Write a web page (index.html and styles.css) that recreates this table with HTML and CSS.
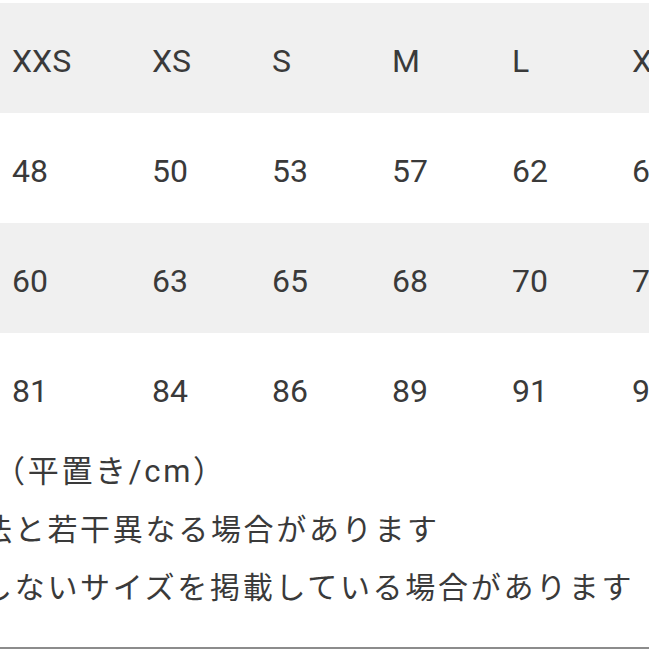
FILE: index.html
```html
<!DOCTYPE html>
<html lang="ja">
<head>
<meta charset="utf-8">
<title>サイズ表</title>
<link rel="stylesheet" href="styles.css">
</head>
<body>
<div class="page">
  <div class="size-table">
    <div class="row shaded">
      <span class="cell">XXS</span><span class="cell">XS</span><span class="cell">S</span><span class="cell">M</span><span class="cell">L</span><span class="cell">XL</span>
    </div>
    <div class="row">
      <span class="cell">48</span><span class="cell">50</span><span class="cell">53</span><span class="cell">57</span><span class="cell">62</span><span class="cell">65</span>
    </div>
    <div class="row shaded">
      <span class="cell">60</span><span class="cell">63</span><span class="cell">65</span><span class="cell">68</span><span class="cell">70</span><span class="cell">72</span>
    </div>
    <div class="row">
      <span class="cell">81</span><span class="cell">84</span><span class="cell">86</span><span class="cell">89</span><span class="cell">91</span><span class="cell">94</span>
    </div>
  </div>
  <div class="notes">
    <p class="note note-unit">（平置き/cm）</p>
    <p class="note note-diff">法と若干異なる場合があります</p>
    <p class="note note-size">しないサイズを掲載している場合があります</p>
  </div>
  <div class="rule"></div>
</div>
</body>
</html>
```
FILE: styles.css
```css
html, body {
  margin: 0;
  padding: 0;
  background: #ffffff;
  overflow: hidden;
}

.page {
  width: 649px;
  height: 649px;
  overflow: hidden;
  padding-top: 3px;
  box-sizing: border-box;
  font-family: Roboto, "Noto Sans CJK JP", sans-serif;
  color: #3a3a3a;
}

.size-table {
  display: flex;
  flex-direction: column;
}

.row {
  display: grid;
  grid-template-columns: 140px 120px 120px 120px 120px 120px;
  align-items: center;
  height: 110px;
  padding-left: 12px;
  font-size: 32px;
  white-space: nowrap;
}

.cell {
  padding-top: 6px;
}

.shaded {
  background: #f0f0f0;
}

.notes {
  display: flex;
  flex-direction: column;
}

.note {
  margin: 0;
  height: 58px;
  line-height: 58px;
  font-size: 30px;
  letter-spacing: 2.7px;
  white-space: nowrap;
}

.note-unit {
  text-indent: -6px;
  font-size: 31px;
}

.note-diff {
  text-indent: -18px;
}

.note-size {
  text-indent: -18px;
}

.rule {
  margin-top: 30px;
  height: 2px;
  background: #8c8c8c;
}
```
